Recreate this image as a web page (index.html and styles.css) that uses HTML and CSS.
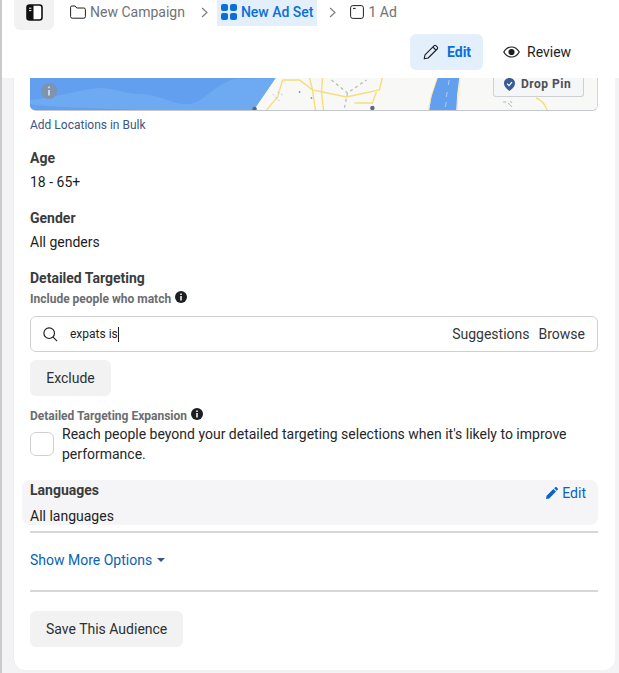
FILE: index.html
```html
<!DOCTYPE html>
<html lang="en">
<head>
<meta charset="utf-8">
<title>New Ad Set</title>
<link rel="stylesheet" href="styles.css">
</head>
<body>
<div class="page">
  <header class="top">
    <div class="crumbs">
      <div class="toggle">
        <svg width="17" height="17" viewBox="0 0 17 17"><rect x="1" y="1" width="15" height="15" rx="2.5" fill="#fff" stroke="#111" stroke-width="1.6"/><path d="M3 1h4.5v15H3a2 2 0 0 1-2-2V3a2 2 0 0 1 2-2z" fill="#111"/><path d="M3 4.2h2.4M3 6.6h2.4" stroke="#fff" stroke-width="1"/></svg>
      </div>
      <div class="crumb first">
        <svg width="16" height="14" viewBox="0 0 16 14" fill="none" stroke="#1c1e21" stroke-width="1"><path d="M.6 2.2A1.2 1.2 0 0 1 1.8 1h3.4l1.6 2h7a1.600 1.600 0 0 1 1.600 1.600v7a1.600 1.600 0 0 1-1.600 1.600H2.200A1.600 1.600 0 0 1 .6 11.600z"/></svg>
        <span>New Campaign</span>
      </div>
      <svg class="chev" width="7" height="11" viewBox="0 0 7 11" fill="none" stroke="#77797c" stroke-width="1.1"><path d="M1 1l5 4.500-5 4.500"/></svg>
      <div class="crumb active">
        <svg width="16" height="16" viewBox="0 0 16 16" fill="#0a6fd8"><rect width="7" height="7" rx="2"/><rect x="9" width="7" height="7" rx="2"/><rect y="9" width="7" height="7" rx="2"/><rect x="9" y="9" width="7" height="7" rx="2"/></svg>
        <span>New Ad Set</span>
      </div>
      <svg class="chev" width="7" height="11" viewBox="0 0 7 11" fill="none" stroke="#77797c" stroke-width="1.1"><path d="M1 1l5 4.500-5 4.500"/></svg>
      <div class="crumb last">
        <svg width="14" height="14" viewBox="0 0 14 14" fill="none" stroke="#1c1e21" stroke-width="1"><rect x=".6" y=".6" width="12.800" height="12.800" rx="2.200"/><path d="M3 3.400h2.600"/></svg>
        <span>1 Ad</span>
      </div>
    </div>
    <div class="modes">
      <div class="mode on">
        <svg width="16" height="16" viewBox="0 0 16 16" fill="none" stroke="#1c1e21" stroke-width="1.100" stroke-linejoin="round"><path d="M1.200 14.800l.8-4L11 1.800a1.500 1.500 0 0 1 2.100 0l1.100 1.100a1.500 1.500 0 0 1 0 2.100l-9 9z"/><path d="M9.800 3l3.200 3.200"/></svg>
        <span>Edit</span>
      </div>
      <div class="mode review">
        <svg width="17" height="12" viewBox="0 0 17 12" fill="none" stroke="#1c1e21" stroke-width="1.200"><path d="M.8 6C2.600 2.800 5.300 1 8.500 1s5.900 1.800 7.700 5c-1.800 3.200-4.500 5-7.700 5S2.600 9.200.8 6z"/><circle cx="8.500" cy="6" r="2.500" fill="#1c1e21"/></svg>
        <span>Review</span>
      </div>
    </div>
  </header>
  <div class="work">
  <main class="panel">
    <div class="map">
      <svg class="map-art" viewBox="0 0 568 32" preserveAspectRatio="none">
        <rect width="568" height="32" fill="#f8f8f7"/>
        <path d="M0 0H246L224 32H0z" fill="#629fee"/>
        <path d="M0 22C25 20 50 11 70 10C85 10 95 16 110 16C130 16 145 28 160 26C175 24 185 6 205 1L246 0L224 32H0z" fill="#6eaaf1"/>
        <path d="M0 26C14 29 60 30 110 32H0z" fill="#629fee"/>
        <path d="M253 2L248 19L237 32M253 2H270L283 12L286 32M280 0L283 12L317 19L350 12L353 0M293 0L292 14L294 32M347 14L343 25H325" fill="none" stroke="#f6dd7a" stroke-width="1.400"/>
        <path d="M302 2L318 15L337 2M318 15L315 30" fill="none" stroke="#b4b7ba" stroke-width="1.200" stroke-dasharray="3 3"/>
        <path d="M243 16l8 8M248 14l5 3" fill="none" stroke="#b6c6d6" stroke-width="1" stroke-dasharray="2 2"/>
        <path d="M408 0H430L428 16L427 32H400L402 18z" fill="#629fee"/>
        <path d="M408 0L402 18L399 32M431 0L429 16L428 32" fill="none" stroke="#f6e8a8" stroke-width="1"/>
        <path d="M420 2l-1 5M418 14l-1 5M417 24l-1 5" stroke="#b6cdec" stroke-width="1"/>
        <path d="M507 20C512 22 516 26 518 32" fill="none" stroke="#f6dd7a" stroke-width="1.400"/>
        <path d="M474 24h3M479 25l4 4M481 23l2 2" stroke="#9bb7d8" stroke-width="1" fill="none"/>
        <circle cx="270" cy="14" r=".9" fill="#5b97dc"/><circle cx="282" cy="20" r=".9" fill="#5b97dc"/>
        <circle cx="225" cy="31" r="2.200" fill="#606770"/>
        <circle cx="343" cy="30" r="2.200" fill="#606770"/>
      </svg>
      <svg class="map-info" width="16" height="16" viewBox="0 0 16 16"><circle cx="8" cy="8" r="8" fill="#7e93ad"/><path d="M8 3.500v1.800M8 7v5.500" stroke="#d4dce6" stroke-width="1.800"/></svg>
      <div class="drop">
        <svg width="11" height="13" viewBox="0 0 11 13"><path d="M5.500 0C8.500 0 11 2.200 11 5.200 11 8.700 7.800 11 5.500 13 3.200 11 0 8.700 0 5.200 0 2.200 2.500 0 5.500 0z" fill="#3c5a94"/><path d="M3 5.600l2 2 3-3.400" fill="none" stroke="#fff" stroke-width="1.200"/></svg>
        <span>Drop Pin</span>
      </div>
    </div>
    <a class="bulk">Add Locations in Bulk</a>

    <h3 class="label age">Age</h3>
    <p class="val">18 - 65+</p>
    <h3 class="label gender">Gender</h3>
    <p class="val">All genders</p>
    <h3 class="label dt">Detailed Targeting</h3>
    <div class="sub inc"><span>Include people who match</span><svg class="i" width="12" height="12" viewBox="0 0 12 12"><circle cx="6" cy="6" r="6" fill="#1c1e21"/><path d="M6 2.400v1.500M6 5v4.500" stroke="#fff" stroke-width="1.500"/></svg></div>
    <div class="search">
      <svg width="15" height="15" viewBox="0 0 17 17" fill="none" stroke="#1c1e21" stroke-width="1.300"><circle cx="7" cy="7" r="6"/><path d="M11.400 11.400l4.600 4.600"/></svg>
      <span class="typed">expats is</span><span class="caret"></span>
      <span class="spacer"></span>
      <span class="act">Suggestions</span>
      <span class="act">Browse</span>
    </div>
    <button class="btn exclude">Exclude</button>
    <div class="sub exp"><span>Detailed Targeting Expansion</span><svg class="i" width="12" height="12" viewBox="0 0 12 12"><circle cx="6" cy="6" r="6" fill="#1c1e21"/><path d="M6 2.400v1.500M6 5v4.500" stroke="#fff" stroke-width="1.500"/></svg></div>
    <div class="check-row">
      <span class="box"></span>
      <p>Reach people beyond your detailed targeting selections when it's likely to improve performance.</p>
    </div>
    <section class="lang">
      <div class="lang-head">
        <h3 class="label">Languages</h3>
        <a class="lang-edit"><svg width="12" height="12" viewBox="0 0 12 12" fill="#0a62c4"><path d="M0 12l.6-3.200L7.400 2l2.600 2.600L3.200 11.400zM8.200 1.200L9.200.3a1 1 0 0 1 1.400 0l1.100 1.100a1 1 0 0 1 0 1.400l-1 1z"/></svg><span>Edit</span></a>
      </div>
      <p class="val">All languages</p>
    </section>
    <hr class="rule">
    <a class="more">Show More Options<span class="caret-down"></span></a>
    <hr class="rule two">
    <button class="btn save">Save This Audience</button>
  </main>
  </div>
</div>
</body>
</html>
```
FILE: styles.css
```css
* { box-sizing: border-box; }
html, body { margin: 0; padding: 0; }
body { width: 619px; height: 673px; overflow: hidden; background: #fff; font-family: Roboto, "Liberation Sans", sans-serif; color: #1c1e21; }
.page { height: 673px; border-left: 2px solid #c9cacc; display: flex; flex-direction: column; }
.top { height: 78px; flex: none; background: #fff; display: flex; flex-direction: column; }
.crumbs { display: flex; align-items: flex-start; height: 34px; padding-left: 12px; font-size: 14px; }
.toggle { width: 40px; height: 30px; background: #f2f2f3; border-radius: 0 0 6px 6px; display: flex; align-items: center; justify-content: center; padding-bottom: 6px; }
.crumb { display: flex; align-items: center; height: 26px; padding-bottom: 2px; }
.crumb.first { margin-left: 16px; gap: 4px; color: #6f7276; }
.chev { margin: 7px 0 0; }
.crumb.first + .chev { margin-left: 16px; margin-right: 9px; }
.crumb.active { background: #e3f0fc; color: #0a6fd8; padding: 0 4px 2px; gap: 4px; font-weight: 500; }
.crumb.active + .chev { margin-left: 12px; margin-right: 14px; }
.crumb.last { gap: 4px; color: #6f7276; }
.modes { display: flex; justify-content: flex-end; gap: 12px; padding-right: 42px; }
.mode { display: flex; align-items: center; gap: 8px; height: 36px; border-radius: 6px; font-size: 14px; color: #1c1e21; }
.mode.on { width: 73px; padding-left: 13px; background: #e3f0fc; color: #0a6fd8; font-weight: 700; }
.mode.review { width: 82px; padding-left: 8px; gap: 7px; }
.work { flex: 1; min-height: 0; background: #f3f3f6; padding: 0 4px 3px 11px; }
.panel { height: 100%; padding: 0 15px 0 16px; background: #fff; border-left: 1px solid #eaebee; border-radius: 0 0 12px 12px; display: flex; flex-direction: column; align-items: flex-start; }
.map { position: relative; width: 568px; height: 33px; flex: none; border-bottom: 1px solid #c4c8cd; border-right: 1px solid #d3d5d8; border-radius: 0 0 6px 6px; overflow: hidden; }
.map-art { display: block; width: 100%; height: 100%; }
.map-info { position: absolute; left: 11px; top: 5px; }
.drop { position: absolute; right: 13px; top: 0; width: 91px; height: 19px; display: flex; align-items: center; gap: 6px; padding: 0 0 6px 10px; background: #f5f6f7; border: 1px solid #ced0d4; border-top: 0; border-radius: 0 0 3px 3px; font-size: 12px; font-weight: 700; letter-spacing: .5px; color: #4b4f56; }
.bulk { font-size: 12px; line-height: 14px; margin-top: 7px; color: #3b5588; }
.label { margin: 0; font-size: 14px; line-height: 18px; font-weight: 700; color: #3a3b3d; }
.val { margin: 0; font-size: 14px; line-height: 18px; color: #1c1e21; }
.age { margin-top: 17px; }
.label + .val { margin-top: 6px; }
.gender { margin-top: 18px; }
.dt { margin-top: 18px; }
.sub { display: flex; align-items: center; gap: 4px; font-size: 12px; font-weight: 700; color: #6b6d70; }
.sub .i { position: relative; top: -2px; }
.inc { height: 14px; margin-top: 5px; }
.search { display: flex; align-items: center; width: 568px; height: 36px; margin-top: 10px; flex: none; padding: 0 12px; border: 1px solid #ced0d4; border-radius: 6px; font-size: 14px; }
.typed { margin-left: 12px; font-size: 12px; }
.caret { width: 1px; height: 15px; background: #1c1e21; }
.spacer { flex: 1; }
.act { margin-left: 9px; color: #333538; }
.btn { border: 0; background: #f2f2f3; border-radius: 6px; height: 36px; padding: 0 16px; font: 14px Roboto, "Liberation Sans", sans-serif; color: #2d2f31; white-space: nowrap; }
.exclude { margin-top: 8px; width: 81px; }
.exp { height: 14px; margin-top: 13px; }
.check-row { display: flex; align-items: flex-start; gap: 8px; height: 50px; margin-top: 1px; }
.box { width: 24px; height: 24px; flex: none; margin-top: 8px; border: 1px solid #ced0d4; border-radius: 6px; background: #fff; }
.check-row p { margin: 0; font-size: 14px; line-height: 20px; color: #25272a; }
.lang { width: 576px; height: 45px; flex: none; margin: 6px 0 0 -8px; padding: 1px 8px 0; background: #f5f5f7; border-radius: 8px; }
.lang-head { display: flex; justify-content: space-between; align-items: flex-start; }
.lang-edit { display: flex; align-items: center; gap: 4px; margin: 4px 4px 0 0; font-size: 14px; color: #0a62c4; }
.lang .val { margin-top: 6px; }
.rule { width: 568px; flex: none; margin: 6px 0 0; border: 0; height: 2px; background: #d6d7d9; }
.more { display: flex; align-items: center; margin-top: 18px; font-size: 14px; line-height: 18px; color: #0a62b4; }
.caret-down { width: 0; height: 0; margin-left: 5px; border-left: 4px solid transparent; border-right: 4px solid transparent; border-top: 4px solid #3b5588; }
.two { margin-top: 21px; }
.save { margin-top: 19px; width: 153px; }
```
